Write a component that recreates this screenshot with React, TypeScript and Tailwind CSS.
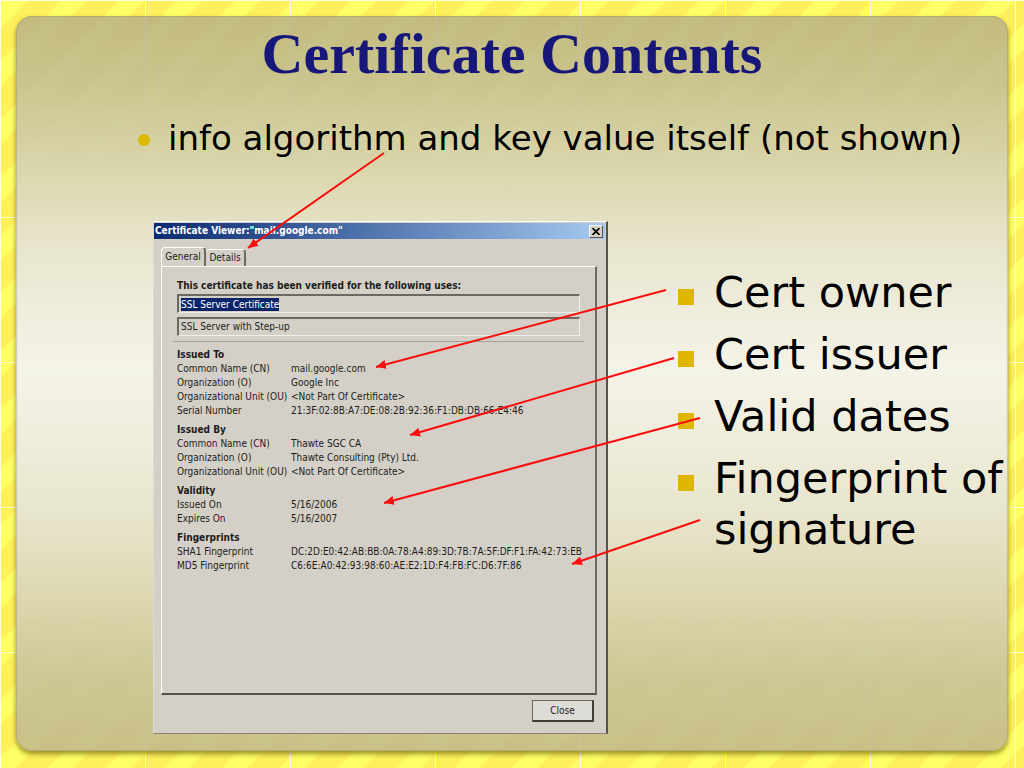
import React from 'react';

interface Section {
  title: string;
  rows: [string, string][];
}

const SECTIONS: Section[] = [
  {
    title: 'Issued To',
    rows: [
      ['Common Name (CN)', 'mail.google.com'],
      ['Organization (O)', 'Google Inc'],
      ['Organizational Unit (OU)', '<Not Part Of Certificate>'],
      ['Serial Number', '21:3F:02:8B:A7:DE:08:2B:92:36:F1:DB:DB:66:E4:46'],
    ],
  },
  {
    title: 'Issued By',
    rows: [
      ['Common Name (CN)', 'Thawte SGC CA'],
      ['Organization (O)', 'Thawte Consulting (Pty) Ltd.'],
      ['Organizational Unit (OU)', '<Not Part Of Certificate>'],
    ],
  },
  {
    title: 'Validity',
    rows: [
      ['Issued On', '5/16/2006'],
      ['Expires On', '5/16/2007'],
    ],
  },
  {
    title: 'Fingerprints',
    rows: [
      ['SHA1 Fingerprint', 'DC:2D:E0:42:AB:BB:0A:78:A4:89:3D:7B:7A:5F:DF:F1:FA:42:73:EB'],
      ['MD5 Fingerprint', 'C6:6E:A0:42:93:98:60:AE:E2:1D:F4:FB:FC:D6:7F:86'],
    ],
  },
];

const NOTES = ['Cert owner', 'Cert issuer', 'Valid dates', 'Fingerprint of signature'];

// from x/y to x/y
const ARROWS = [
  [384, 153, 248, 248],
  [666, 290, 376, 367],
  [674, 358, 410, 435],
  [700, 418, 384, 503],
  [700, 520, 572, 564],
];

const Backdrop: React.FC = () => (
  <svg className="absolute inset-0 h-full w-full" aria-hidden="true">
    <defs>
      <linearGradient id="stripes" gradientUnits="userSpaceOnUse" x1="6" y1="0" x2="35" y2="29" spreadMethod="repeat">
        <stop offset="0" stopColor="#ffff66" />
        <stop offset="0.36" stopColor="#ffff66" />
        <stop offset="0.44" stopColor="#fdf05a" />
        <stop offset="0.92" stopColor="#fdf05a" />
        <stop offset="1" stopColor="#ffff66" />
      </linearGradient>
      <pattern id="columns" width="145" height="145" patternUnits="userSpaceOnUse">
        <path d="M0.5 0V145" stroke="#ffffe0" />
      </pattern>
      <pattern id="rows" y="72" width="145" height="145" patternUnits="userSpaceOnUse">
        <path d="M0 0.5H145" stroke="#ffffd0" />
      </pattern>
    </defs>
    <rect width="100%" height="100%" fill="url(#stripes)" />
    <rect width="100%" height="100%" fill="url(#columns)" />
    <rect width="100%" height="1" fill="#ffffe0" />
    <rect y="100" width="100%" height="100%" fill="url(#rows)" />
  </svg>
);

const Arrows: React.FC = () => (
  <svg className="pointer-events-none absolute inset-0 h-full w-full" aria-hidden="true">
    <defs>
      <marker id="head" markerWidth="10" markerHeight="9" refX="10" refY="4.5" orient="auto" markerUnits="userSpaceOnUse">
        <path d="M0 0L10 4.5L0 9Z" fill="#fc0d0d" />
      </marker>
    </defs>
    {ARROWS.map(([x1, y1, x2, y2]) => (
      <line key={y1} x1={x1} y1={y1} x2={x2} y2={y2} stroke="#fc0d0d" strokeWidth="2" markerEnd="url(#head)" />
    ))}
  </svg>
);

const CertificateViewer: React.FC = () => (
  <section className="flex w-[46%] min-w-[455px] shrink-0 flex-col border border-t-white border-l-[#dedbd4] border-r-2 border-r-[#55534f] border-b-[#85827c] bg-[#d4d0c8] font-['DejaVu_Sans_Condensed','DejaVu_Sans',sans-serif] text-[10px] leading-[14px] text-[#1c1c1c]">
    <header className="mt-px mr-px flex h-4 items-center justify-between bg-linear-to-r from-[#0c2a70] to-[#a6caf0] pr-[2px] pl-px">
      <h2 className="font-bold text-white">Certificate Viewer:"mail.google.com"</h2>
      <button aria-label="Close window" className="flex h-[13px] w-[14px] items-center justify-center border border-t-white border-l-white border-r-[#55534f] border-b-[#55534f] bg-[#d4d0c8]">
        <svg width="8" height="7" viewBox="0 0 8 7" stroke="#000" strokeWidth="1.6">
          <path d="M0.5 0L7.5 7M7.5 0L0.5 7" />
        </svg>
      </button>
    </header>

    <div className="flex flex-1 flex-col px-[7px] pt-2 pr-[9px]">
      <div role="tablist" className="flex items-end">
        <button role="tab" aria-selected="true" className="h-[19px] w-[45px] rounded-t-sm border-t border-l border-r-2 border-t-white border-l-white border-r-[#6b6963] pb-px whitespace-nowrap">
          General
        </button>
        <button role="tab" aria-selected="false" className="h-[17px] w-10 rounded-t-sm border-t border-r-2 border-t-white border-r-[#6b6963] whitespace-nowrap">
          Details
        </button>
      </div>

      <div role="tabpanel" className="flex flex-1 flex-col border border-t-white border-l-white border-r-2 border-b-2 border-r-[#6b6963] border-b-[#55534f] px-[15px] pt-3">
        <h3 className="font-bold">This certificate has been verified for the following uses:</h3>
        <ul className="mt-px flex flex-col gap-1">
          <li className="flex h-[19px] items-center border border-t-2 border-l-2 border-t-[#6b6963] border-l-[#6b6963] border-r-[#efeeea] border-b-[#efeeea] px-[2px]">
            <span className="bg-[#0a246a] leading-[13px] text-white">SSL Server Certificate</span>
          </li>
          <li className="flex h-[19px] items-center border border-t-2 border-l-2 border-t-[#6b6963] border-l-[#6b6963] border-r-[#efeeea] border-b-[#efeeea] px-[2px]">
            SSL Server with Step-up
          </li>
        </ul>
        <hr className="-mx-1 mt-[5px] border-[#a5a29b]" />

        <div className="mt-[6px] flex flex-col gap-[5px]">
          {SECTIONS.map(section => (
            <table key={section.title} className="w-full table-fixed text-left">
              <caption className="text-left font-bold">{section.title}</caption>
              <tbody>
                {section.rows.map(([label, value]) => (
                  <tr key={label}>
                    <th className="w-[114px] p-0 font-normal whitespace-nowrap">{label}</th>
                    <td className="p-0 whitespace-nowrap">{value}</td>
                  </tr>
                ))}
              </tbody>
            </table>
          ))}
        </div>
      </div>

      <footer className="flex justify-end pt-[5px] pr-[3px] pb-[11px]">
        <button className="h-[22px] w-[62px] border border-t-[#6b6963] border-l-[#6b6963] border-r-2 border-b-2 border-r-[#403e3a] border-b-[#403e3a] bg-[#dedcd6]">
          Close
        </button>
      </footer>
    </div>
  </section>
);

const App: React.FC = () => {
  return (
    <div className="relative flex min-h-screen flex-col overflow-hidden bg-[#ffff66] p-4 pb-[17px] font-['DejaVu_Sans',sans-serif] text-black">
      <Backdrop />

      <main className="relative flex flex-1 flex-col rounded-2xl bg-[linear-gradient(180deg,rgba(180,172,136,0.8)_0%,rgba(194,190,151,0.85)_10%,#ddd9b3_23%,#e9e6cf_32%,#f4f3e7_48%,#e9e6cf_67%,#dbd6ad_80%,rgba(199,195,153,0.9)_90%,rgba(192,183,142,0.85)_100%)] pb-[17px] shadow-[0_3px_5px_rgba(110,100,0,0.7),inset_0_0_1px_1px_rgba(150,140,100,0.4)]">
        <h1 className="pt-[6px] text-center font-['Liberation_Serif',serif] text-[58px] leading-[64px] font-bold text-[#17177a]">
          Certificate Contents
        </h1>

        <ul className="mt-[30px] pl-[122px]">
          <li className="flex items-center gap-[18px] text-[34px] leading-[44px] whitespace-nowrap">
            <span className="mt-1 h-3 w-3 shrink-0 rounded-full bg-[#dcb900]" />
            info algorithm and key value itself (not shown)
          </li>
        </ul>

        <div className="mt-[61px] flex flex-1 pl-[137px]">
          <CertificateViewer />
          <ul className="mt-[46px] flex min-w-0 flex-1 flex-col gap-[11px] pl-[70px] text-[43px] leading-[51px]">
            {NOTES.map(note => (
              <li key={note} className="flex gap-5">
                <span className="mt-[22px] h-4 w-4 shrink-0 bg-[#dfb703]" />
                <span>{note}</span>
              </li>
            ))}
          </ul>
        </div>
      </main>

      <Arrows />
    </div>
  );
};

export default App;
